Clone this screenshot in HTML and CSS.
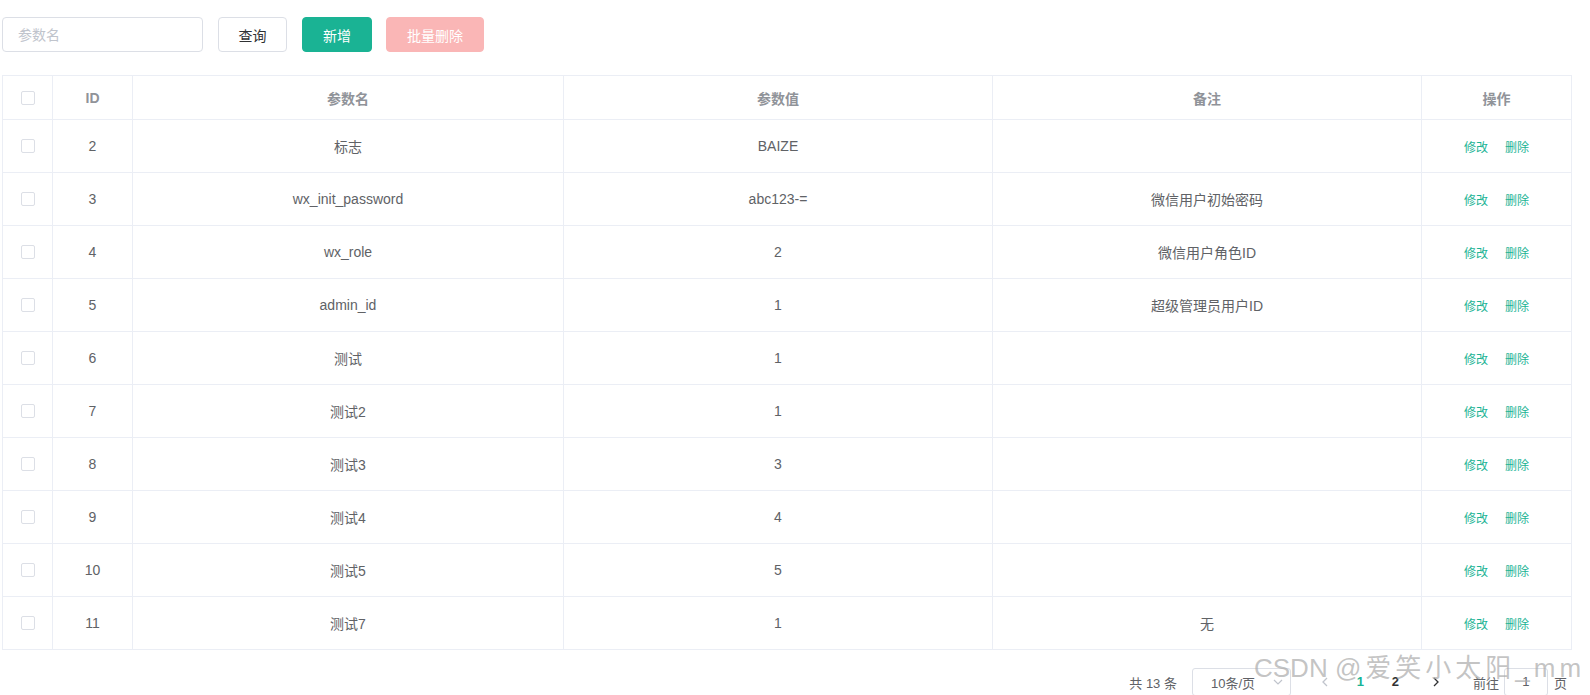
FILE: index.html
```html
<!DOCTYPE html>
<html lang="zh-CN">
<head>
<meta charset="utf-8">
<title>参数管理</title>
<link rel="stylesheet" href="styles.css">
</head>
<body>
<div class="page">
  <div class="toolbar">
    <input class="search-input" type="text" placeholder="参数名">
    <button class="btn btn-default">查询</button>
    <button class="btn btn-primary">新增</button>
    <button class="btn btn-danger-disabled">批量删除</button>
  </div>

  <table class="grid">
    <colgroup>
      <col class="c-check"><col class="c-id"><col class="c-name"><col class="c-value"><col class="c-remark"><col class="c-ops">
    </colgroup>
    <thead>
      <tr>
        <th><span class="checkbox"></span></th>
        <th>ID</th>
        <th>参数名</th>
        <th>参数值</th>
        <th>备注</th>
        <th>操作</th>
      </tr>
    </thead>
    <tbody>
      <tr><td><span class="checkbox"></span></td><td>2</td><td>标志</td><td>BAIZE</td><td></td><td><span class="op">修改</span><span class="op">删除</span></td></tr>
      <tr><td><span class="checkbox"></span></td><td>3</td><td>wx_init_password</td><td>abc123-=</td><td>微信用户初始密码</td><td><span class="op">修改</span><span class="op">删除</span></td></tr>
      <tr><td><span class="checkbox"></span></td><td>4</td><td>wx_role</td><td>2</td><td>微信用户角色ID</td><td><span class="op">修改</span><span class="op">删除</span></td></tr>
      <tr><td><span class="checkbox"></span></td><td>5</td><td>admin_id</td><td>1</td><td>超级管理员用户ID</td><td><span class="op">修改</span><span class="op">删除</span></td></tr>
      <tr><td><span class="checkbox"></span></td><td>6</td><td>测试</td><td>1</td><td></td><td><span class="op">修改</span><span class="op">删除</span></td></tr>
      <tr><td><span class="checkbox"></span></td><td>7</td><td>测试2</td><td>1</td><td></td><td><span class="op">修改</span><span class="op">删除</span></td></tr>
      <tr><td><span class="checkbox"></span></td><td>8</td><td>测试3</td><td>3</td><td></td><td><span class="op">修改</span><span class="op">删除</span></td></tr>
      <tr><td><span class="checkbox"></span></td><td>9</td><td>测试4</td><td>4</td><td></td><td><span class="op">修改</span><span class="op">删除</span></td></tr>
      <tr><td><span class="checkbox"></span></td><td>10</td><td>测试5</td><td>5</td><td></td><td><span class="op">修改</span><span class="op">删除</span></td></tr>
      <tr><td><span class="checkbox"></span></td><td>11</td><td>测试7</td><td>1</td><td>无</td><td><span class="op">修改</span><span class="op">删除</span></td></tr>
    </tbody>
  </table>

  <div class="pager">
    <span class="total">共 13 条</span>
    <div class="sizes">
      <span>10条/页</span>
      <svg class="caret" width="12" height="12" viewBox="0 0 12 12"><path d="M2 4l4 4 4-4" fill="none" stroke="#c0c4cc" stroke-width="1.2"/></svg>
    </div>
    <span class="nav prev"><svg width="10" height="12" viewBox="0 0 10 12"><path d="M7 2L3 6l4 4" fill="none" stroke="#c0c4cc" stroke-width="1.3"/></svg></span>
    <span class="num active">1</span>
    <span class="num">2</span>
    <span class="nav next"><svg width="10" height="12" viewBox="0 0 10 12"><path d="M3 2l4 4-4 4" fill="none" stroke="#303133" stroke-width="1.3"/></svg></span>
    <span class="jump">前往</span>
    <span class="jump-input">1</span>
    <span class="jump-unit">页</span>
  </div>

  <div class="watermark">CSDN <span class="wm-tail">@爱笑小太阳_mm</span></div>
</div>
</body>
</html>
```

FILE: styles.css
```css
* { box-sizing: border-box; }

html, body {
  margin: 0;
  padding: 0;
  background: #ffffff;
}

body {
  font-family: "Liberation Sans", "Noto Sans CJK SC", sans-serif;
  color: #606266;
  font-size: 14px;
}

.page {
  position: relative;
  padding: 17px 19px 0 2px;
  height: 695px;
  overflow: hidden;
}

.toolbar {
  display: flex;
  align-items: center;
  height: 35px;
}

.search-input {
  width: 201px;
  height: 35px;
  border: 1px solid #dcdfe6;
  border-radius: 4px;
  padding: 0 15px;
  font-family: inherit;
  font-size: 14px;
  color: #606266;
  outline: none;
}
.search-input::placeholder { color: #c0c4cc; }

.btn {
  height: 35px;
  margin-left: 15px;
  border-radius: 4px;
  font-family: inherit;
  font-size: 14px;
  padding: 0 20px;
  border: 1px solid #dcdfe6;
  background: #ffffff;
  color: #606266;
  cursor: pointer;
}
.btn-default { width: 69px; color: #303133; padding: 0; }
.btn-primary {
  width: 70px;
  padding: 0;
  background: #1ab394;
  border-color: #1ab394;
  color: #ffffff;
}
.btn-danger-disabled {
  width: 98px;
  margin-left: 14px;
  padding: 0;
  background: #fab6b6;
  border-color: #fab6b6;
  color: #ffffff;
}

.grid {
  margin-top: 23px;
  width: 1569px;
  border-collapse: collapse;
  table-layout: fixed;
  border: 1px solid #ebeef5;
}
.c-check { width: 50px; }
.c-id { width: 80px; }
.c-name { width: 431px; }
.c-value { width: 429px; }
.c-remark { width: 429px; }
.c-ops { width: 150px; }

.grid th, .grid td {
  border: 1px solid #ebeef5;
  text-align: center;
  padding: 0;
  font-size: 14px;
  white-space: nowrap;
}
.grid th {
  height: 44px;
  color: #909399;
  font-weight: bold;
}
.grid td {
  height: 53px;
  color: #606266;
}

.checkbox {
  display: inline-block;
  width: 14px;
  height: 14px;
  border: 1px solid #dcdfe6;
  border-radius: 2px;
  background: #fff;
  vertical-align: middle;
  margin-top: -2px;
}

.op {
  font-size: 12px;
  color: #1ab394;
}
.op + .op { margin-left: 17px; }

.pager {
  display: flex;
  align-items: center;
  justify-content: flex-end;
  margin-top: 18px;
  padding-right: 4px;
  height: 28px;
  font-size: 13px;
  color: #606266;
}

.total { margin-right: 15px; }

.sizes {
  width: 99px;
  height: 28px;
  border: 1px solid #dcdfe6;
  border-radius: 3px;
  display: flex;
  align-items: center;
  justify-content: space-between;
  padding: 0 6px 0 18px;
  color: #606266;
}

.nav {
  width: 30px;
  height: 28px;
  display: flex;
  align-items: center;
  justify-content: center;
}
.prev { margin-left: 19px; }
.next { margin-left: 8px; }

.num {
  width: 35px;
  height: 28px;
  line-height: 28px;
  text-align: center;
  font-weight: bold;
  color: #303133;
}
.num.active { color: #1ab394; margin-left: 3px; }

.jump { margin-left: 22px; }
.jump-input {
  width: 44px;
  height: 28px;
  margin-left: 5px;
  border: 1px solid #dcdfe6;
  border-radius: 3px;
  text-align: center;
  line-height: 26px;
}
.jump-unit { margin-left: 6px; }

.watermark {
  position: absolute;
  left: 1254px;
  top: 647px;
  font-size: 26px;
  color: rgba(170, 170, 170, 0.7);
  white-space: nowrap;
  pointer-events: none;
}
.wm-tail { letter-spacing: 4px; }
```
